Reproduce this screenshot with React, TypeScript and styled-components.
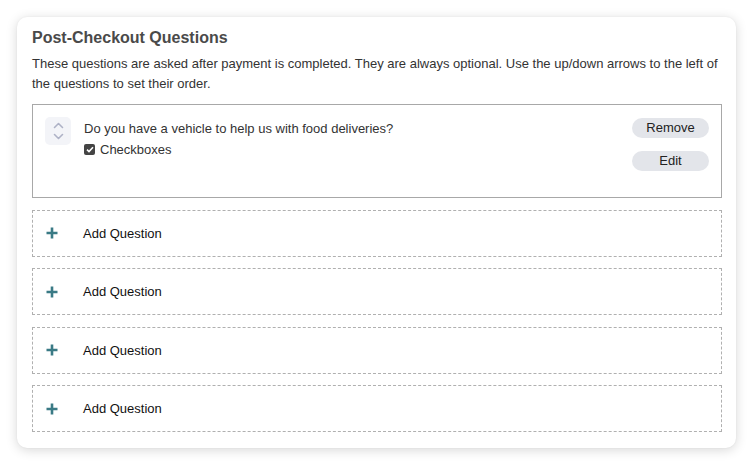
import React from 'react';
import styled, { createGlobalStyle } from 'styled-components';

const GlobalStyle = createGlobalStyle`
  html, body {
    margin: 0;
    padding: 0;
    background: #ffffff;
    font-family: "Liberation Sans", Arial, sans-serif;
  }
`;

const Page = styled.div`
  width: 754px;
  height: 466px;
  padding: 17px 18px 18px 17px;
  box-sizing: border-box;
`;

const Card = styled.section`
  background: #fff;
  border-radius: 10px;
  box-shadow: 0 2px 12px rgba(0, 0, 0, 0.16), 0 0 2px rgba(0, 0, 0, 0.06);
  padding: 11px 14px 15px 15px;
  height: 431px;
  box-sizing: border-box;
`;

const Title = styled.h2`
  margin: 0;
  font-size: 16px;
  font-weight: 700;
  color: #4a4a4a;
  line-height: 20px;
`;

const Description = styled.p`
  margin: 6px 0 10px;
  font-size: 13px;
  line-height: 20px;
  color: #333;
`;

const List = styled.div`
  display: flex;
  flex-direction: column;
  gap: 11.6px;
`;

const QuestionRow = styled.div`
  border: 1px solid #a8a8a8;
  height: 94px;
  box-sizing: border-box;
  display: flex;
  align-items: flex-start;
  padding: 12px 12px 0 12px;
`;

const Sorter = styled.div`
  width: 26px;
  height: 28px;
  background: #f3f4f8;
  border-radius: 5px;
  display: flex;
  flex-direction: column;
  align-items: center;
  justify-content: center;
  gap: 4px;
  margin-right: 13px;
`;

const Body = styled.div`
  flex: 1;
  padding-top: 3px;
`;

const QuestionText = styled.div`
  font-size: 13px;
  line-height: 17px;
  color: #333;
`;

const TypeLine = styled.div`
  display: flex;
  align-items: center;
  gap: 5px;
  margin-top: 5px;
  font-size: 13px;
  color: #333;
`;

const CheckMark = styled.span`
  width: 11px;
  height: 11px;
  border-radius: 2px;
  background: #444;
  display: inline-flex;
  align-items: center;
  justify-content: center;
`;

const Actions = styled.div`
  display: flex;
  flex-direction: column;
  gap: 13px;
  padding-top: 1px;
`;

const Pill = styled.button`
  width: 77px;
  height: 20px;
  border: none;
  border-radius: 10px;
  background: #e3e5ea;
  color: #222;
  font-family: inherit;
  font-size: 13px;
  padding: 0;
  line-height: 20px;
  cursor: pointer;
`;

const AddRow = styled.div`
  border: 1px dashed #b0b0b0;
  height: 47px;
  box-sizing: border-box;
  display: flex;
  align-items: center;
  padding-left: 13px;
  font-size: 13px;
  color: #111;
  gap: 25px;
`;

const Chevron = ({ up }: { up?: boolean }) => (
  <svg width="11" height="7" viewBox="0 0 11 7">
    <path
      d={up ? 'M1.5 5.5 L5.5 1.5 L9.5 5.5' : 'M1.5 1.5 L5.5 5.5 L9.5 1.5'}
      fill="none"
      stroke="#aeb2c6"
      strokeWidth="1.6"
      strokeLinecap="round"
      strokeLinejoin="round"
    />
  </svg>
);

const Plus = () => (
  <svg width="12" height="12" viewBox="0 0 12 12">
    <path d="M6 0.5 V11.5 M0.5 6 H11.5" stroke="#3a7a85" strokeWidth="2.6" />
  </svg>
);

function App() {
  const slots = [1, 2, 3, 4];
  return (
    <Page>
      <GlobalStyle />
      <Card>
        <Title>Post-Checkout Questions</Title>
        <Description>
          These questions are asked after payment is completed. They are always optional. Use the up/down arrows to the left of
          the questions to set their order.
        </Description>
        <List>
          <QuestionRow>
            <Sorter>
              <Chevron up />
              <Chevron />
            </Sorter>
            <Body>
              <QuestionText>Do you have a vehicle to help us with food deliveries?</QuestionText>
              <TypeLine>
                <CheckMark>
                  <svg width="8" height="7" viewBox="0 0 8 7">
                    <path d="M1 3.6 L3 5.5 L7 1.2" fill="none" stroke="#fff" strokeWidth="1.6" />
                  </svg>
                </CheckMark>
                Checkboxes
              </TypeLine>
            </Body>
            <Actions>
              <Pill>Remove</Pill>
              <Pill>Edit</Pill>
            </Actions>
          </QuestionRow>
          {slots.map((n) => (
            <AddRow key={n}>
              <Plus />
              Add Question
            </AddRow>
          ))}
        </List>
      </Card>
    </Page>
  );
}

export default App;
